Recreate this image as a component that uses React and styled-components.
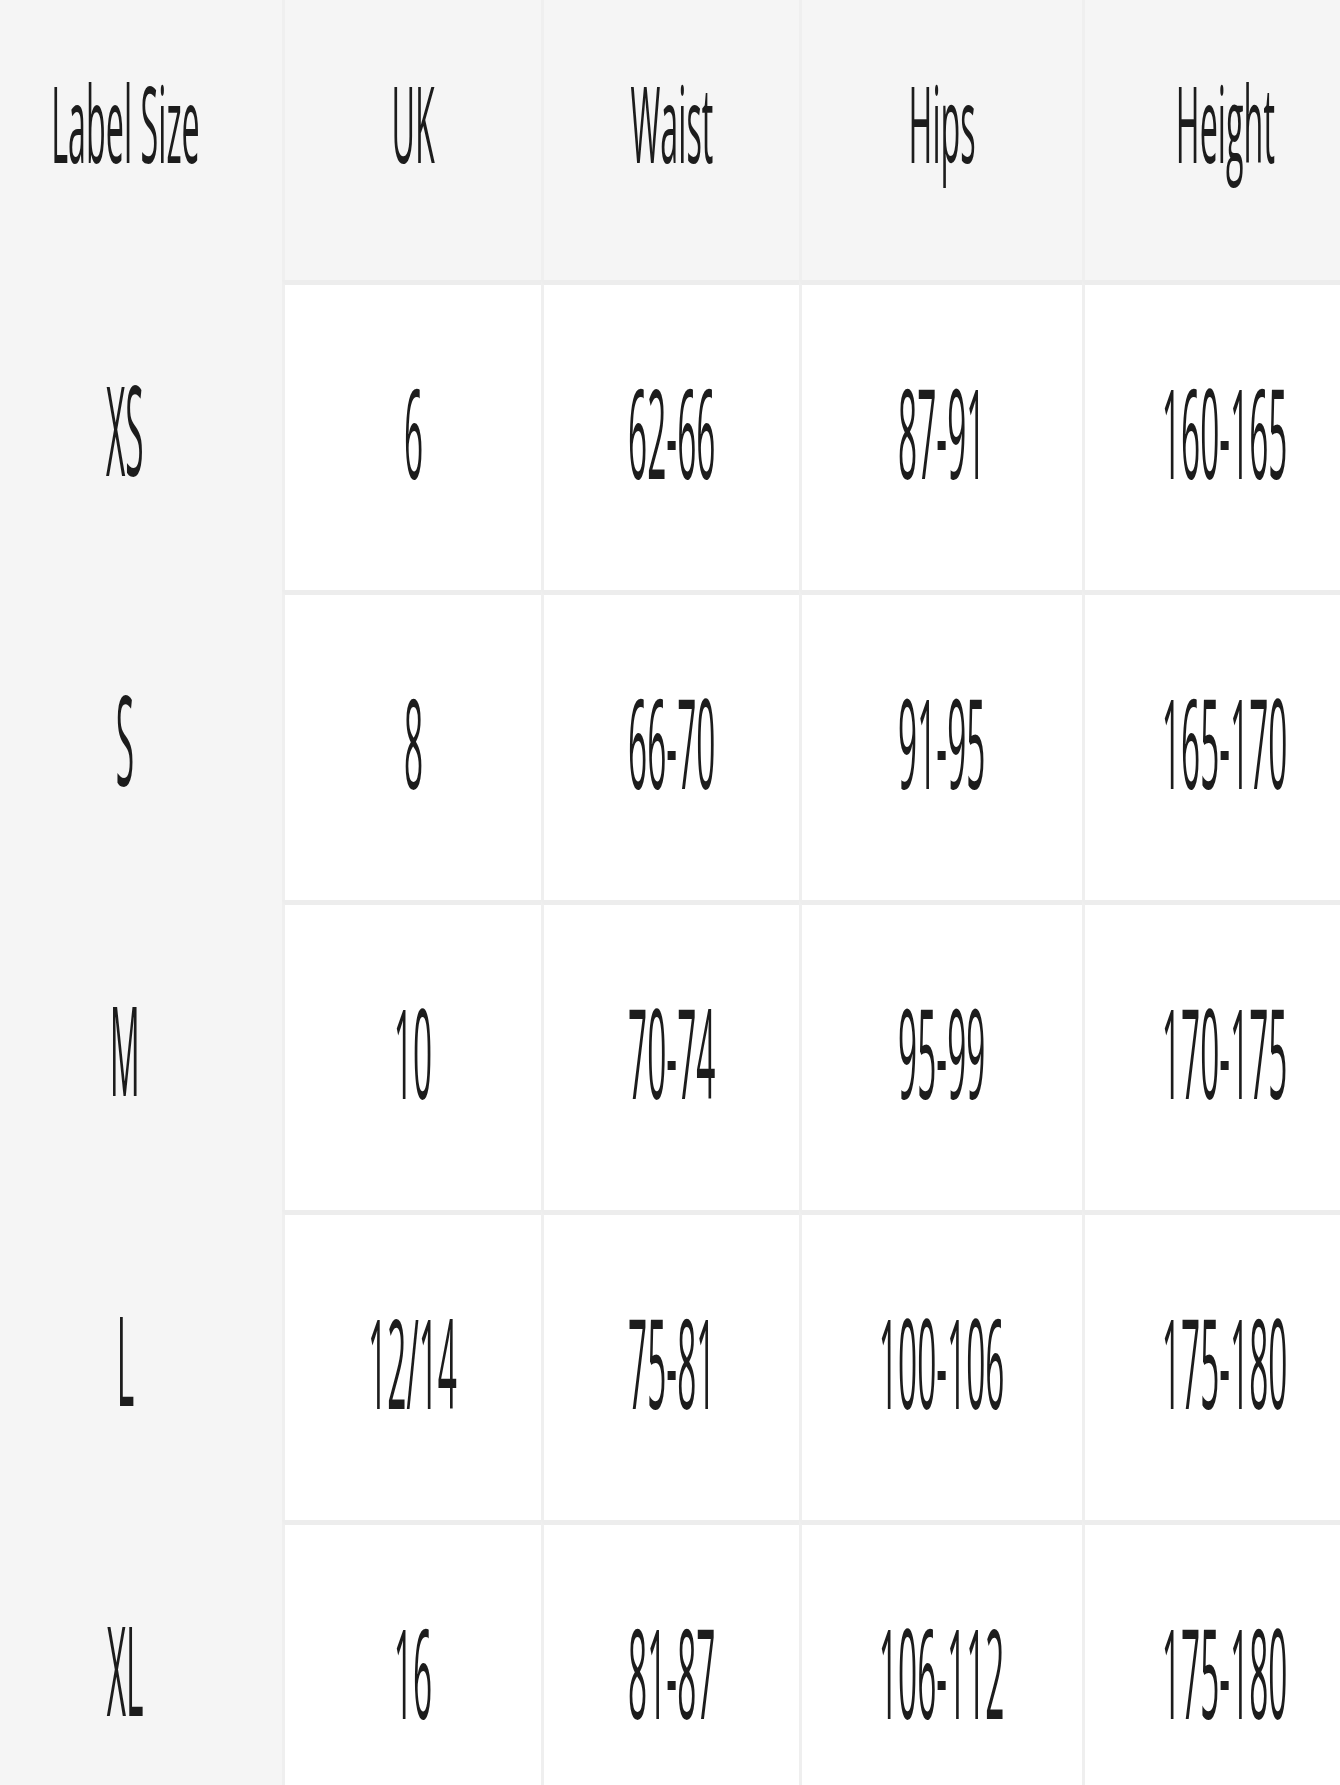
import React from 'react';
import styled, { createGlobalStyle } from 'styled-components'

const GlobalStyle = createGlobalStyle`
  html, body {
    margin: 0;
    padding: 0;
    background: #ffffff;
  }
`

const Viewport = styled.div`
  width: 1340px;
  height: 1785px;
  overflow: hidden;
  font-family: "Open Sans", "Noto Sans", sans-serif;
  color: #1c1c1c;
`

const Table = styled.div`
  display: grid;
  grid-template-columns: 282px 259px 258px 283px 283px;
  grid-template-rows: 280px repeat(5, 310px);
  width: 1365px;
`

const Cell = styled.div`
  display: flex;
  align-items: center;
  justify-content: center;
  overflow: visible;
  box-sizing: border-box;
  background: ${p => (p.$shaded ? '#f5f5f5' : '#ffffff')};
  border-left: ${p => (p.$first ? 'none' : '3px solid #efefef')};
  border-top: ${p => (p.$ruled ? '5px solid #ededed' : 'none')};
  padding-right: ${p => (p.$first ? '32px' : '0')};
  padding-bottom: ${p => (p.$head ? '36px' : '14px')};
`

const Text = styled.span`
  display: inline-block;
  white-space: nowrap;
  font-size: ${p => (p.$head ? '106px' : '124px')};
  line-height: 1;
  font-weight: 400;
  transform: ${p => (p.$head ? 'scaleX(0.305)' : 'scaleX(0.27)')};
  transform-origin: center;
`

const headers = ['Label Size', 'UK', 'Waist', 'Hips', 'Height']

const rows = [
  ['XS', '6', '62-66', '87-91', '160-165'],
  ['S', '8', '66-70', '91-95', '165-170'],
  ['M', '10', '70-74', '95-99', '170-175'],
  ['L', '12/14', '75-81', '100-106', '175-180'],
  ['XL', '16', '81-87', '106-112', '175-180'],
]

function App() {
  return (
    <Viewport>
      <GlobalStyle />
      <Table>
        {headers.map((h, i) => (
          <Cell key={h} $shaded $head $first={i === 0}>
            <Text $head>{h}</Text>
          </Cell>
        ))}
        {rows.map(row =>
          row.map((value, i) => (
            <Cell
              key={row[0] + i}
              $shaded={i === 0}
              $first={i === 0}
              $ruled={i !== 0}
            >
              <Text>{value}</Text>
            </Cell>
          ))
        )}
      </Table>
    </Viewport>
  );
}

export default App;
